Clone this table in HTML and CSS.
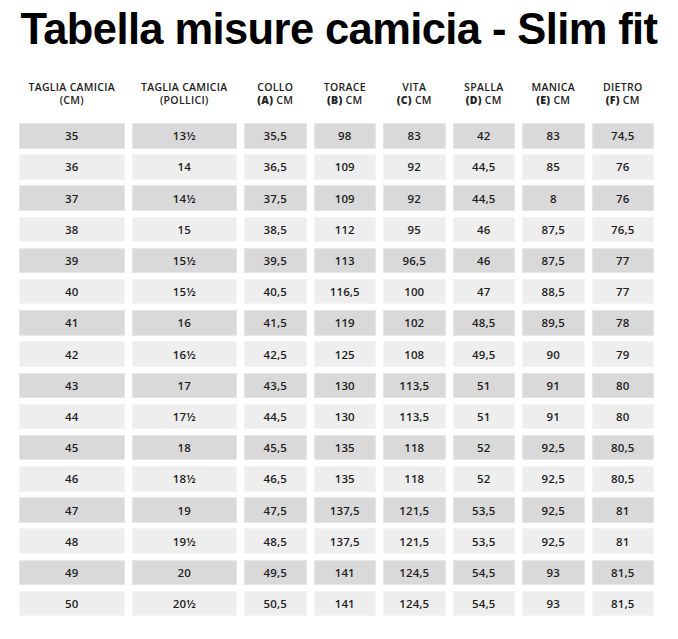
FILE: index.html
```html
<!DOCTYPE html>
<html lang="it">
<head>
<meta charset="utf-8">
<title>Tabella misure camicia - Slim fit</title>
<link rel="stylesheet" href="styles.css">
</head>
<body>
<h1 class="title">Tabella misure camicia - Slim fit</h1>
<div class="table">
  <div class="head">
    <div class="th">TAGLIA CAMICIA<br>(CM)</div>
    <div class="th">TAGLIA CAMICIA<br>(POLLICI)</div>
    <div class="th">COLLO<br><b>(A)</b> CM</div>
    <div class="th">TORACE<br><b>(B)</b> CM</div>
    <div class="th">VITA<br><b>(C)</b> CM</div>
    <div class="th">SPALLA<br><b>(D)</b> CM</div>
    <div class="th">MANICA<br><b>(E)</b> CM</div>
    <div class="th">DIETRO<br><b>(F)</b> CM</div>
  </div>
  <div class="body">
    <div class="row dark"><div class="td">35</div><div class="td">13½</div><div class="td">35,5</div><div class="td">98</div><div class="td">83</div><div class="td">42</div><div class="td">83</div><div class="td">74,5</div></div>
    <div class="row light"><div class="td">36</div><div class="td">14</div><div class="td">36,5</div><div class="td">109</div><div class="td">92</div><div class="td">44,5</div><div class="td">85</div><div class="td">76</div></div>
    <div class="row dark"><div class="td">37</div><div class="td">14½</div><div class="td">37,5</div><div class="td">109</div><div class="td">92</div><div class="td">44,5</div><div class="td">8</div><div class="td">76</div></div>
    <div class="row light"><div class="td">38</div><div class="td">15</div><div class="td">38,5</div><div class="td">112</div><div class="td">95</div><div class="td">46</div><div class="td">87,5</div><div class="td">76,5</div></div>
    <div class="row dark"><div class="td">39</div><div class="td">15½</div><div class="td">39,5</div><div class="td">113</div><div class="td">96,5</div><div class="td">46</div><div class="td">87,5</div><div class="td">77</div></div>
    <div class="row light"><div class="td">40</div><div class="td">15½</div><div class="td">40,5</div><div class="td">116,5</div><div class="td">100</div><div class="td">47</div><div class="td">88,5</div><div class="td">77</div></div>
    <div class="row dark"><div class="td">41</div><div class="td">16</div><div class="td">41,5</div><div class="td">119</div><div class="td">102</div><div class="td">48,5</div><div class="td">89,5</div><div class="td">78</div></div>
    <div class="row light"><div class="td">42</div><div class="td">16½</div><div class="td">42,5</div><div class="td">125</div><div class="td">108</div><div class="td">49,5</div><div class="td">90</div><div class="td">79</div></div>
    <div class="row dark"><div class="td">43</div><div class="td">17</div><div class="td">43,5</div><div class="td">130</div><div class="td">113,5</div><div class="td">51</div><div class="td">91</div><div class="td">80</div></div>
    <div class="row light"><div class="td">44</div><div class="td">17½</div><div class="td">44,5</div><div class="td">130</div><div class="td">113,5</div><div class="td">51</div><div class="td">91</div><div class="td">80</div></div>
    <div class="row dark"><div class="td">45</div><div class="td">18</div><div class="td">45,5</div><div class="td">135</div><div class="td">118</div><div class="td">52</div><div class="td">92,5</div><div class="td">80,5</div></div>
    <div class="row light"><div class="td">46</div><div class="td">18½</div><div class="td">46,5</div><div class="td">135</div><div class="td">118</div><div class="td">52</div><div class="td">92,5</div><div class="td">80,5</div></div>
    <div class="row dark"><div class="td">47</div><div class="td">19</div><div class="td">47,5</div><div class="td">137,5</div><div class="td">121,5</div><div class="td">53,5</div><div class="td">92,5</div><div class="td">81</div></div>
    <div class="row light"><div class="td">48</div><div class="td">19½</div><div class="td">48,5</div><div class="td">137,5</div><div class="td">121,5</div><div class="td">53,5</div><div class="td">92,5</div><div class="td">81</div></div>
    <div class="row dark"><div class="td">49</div><div class="td">20</div><div class="td">49,5</div><div class="td">141</div><div class="td">124,5</div><div class="td">54,5</div><div class="td">93</div><div class="td">81,5</div></div>
    <div class="row light"><div class="td">50</div><div class="td">20½</div><div class="td">50,5</div><div class="td">141</div><div class="td">124,5</div><div class="td">54,5</div><div class="td">93</div><div class="td">81,5</div></div>
  </div>
</div>
</body>
</html>
```
FILE: styles.css
```css
html, body {
  margin: 0;
  padding: 0;
  background: #ffffff;
}
body {
  width: 678px;
  color: #1c1c1c;
}
.title {
  box-sizing: border-box;
  margin: 0;
  padding-top: 5px;
  height: 53px;
  font-family: "Liberation Sans", Arial, sans-serif;
  font-weight: 700;
  font-size: 43.5px;
  line-height: 48px;
  text-align: center;
  color: #000;
  letter-spacing: -0.6px;
}
.table {
  margin-left: 19px;
  width: 635px;
  font-family: "Open Sans", "DejaVu Sans", sans-serif;
}
.head, .row {
  display: grid;
  grid-template-columns: 105.5px 105.5px repeat(6, 62.5px);
  column-gap: 7px;
}
.head {
  margin-top: 28px;
  height: 42px;
}
.th {
  text-align: center;
  font-size: 10.5px;
  line-height: 13px;
  font-weight: 600;
  color: #222;
  letter-spacing: 0.3px;
}
.th b {
  font-weight: 800;
}
.body {
  display: flex;
  flex-direction: column;
  row-gap: 5.7px;
}
.row {
  height: 25.5px;
}
.td {
  display: flex;
  align-items: center;
  justify-content: center;
  font-size: 11.5px;
  font-weight: 600;
  color: #1e1e1e;
  letter-spacing: 0.1px;
  box-shadow: inset 0 0 0 1px rgba(255,255,255,0.35);
}
.dark .td { background: #d9d9d9; }
.light .td { background: #eeeeee; }
```
